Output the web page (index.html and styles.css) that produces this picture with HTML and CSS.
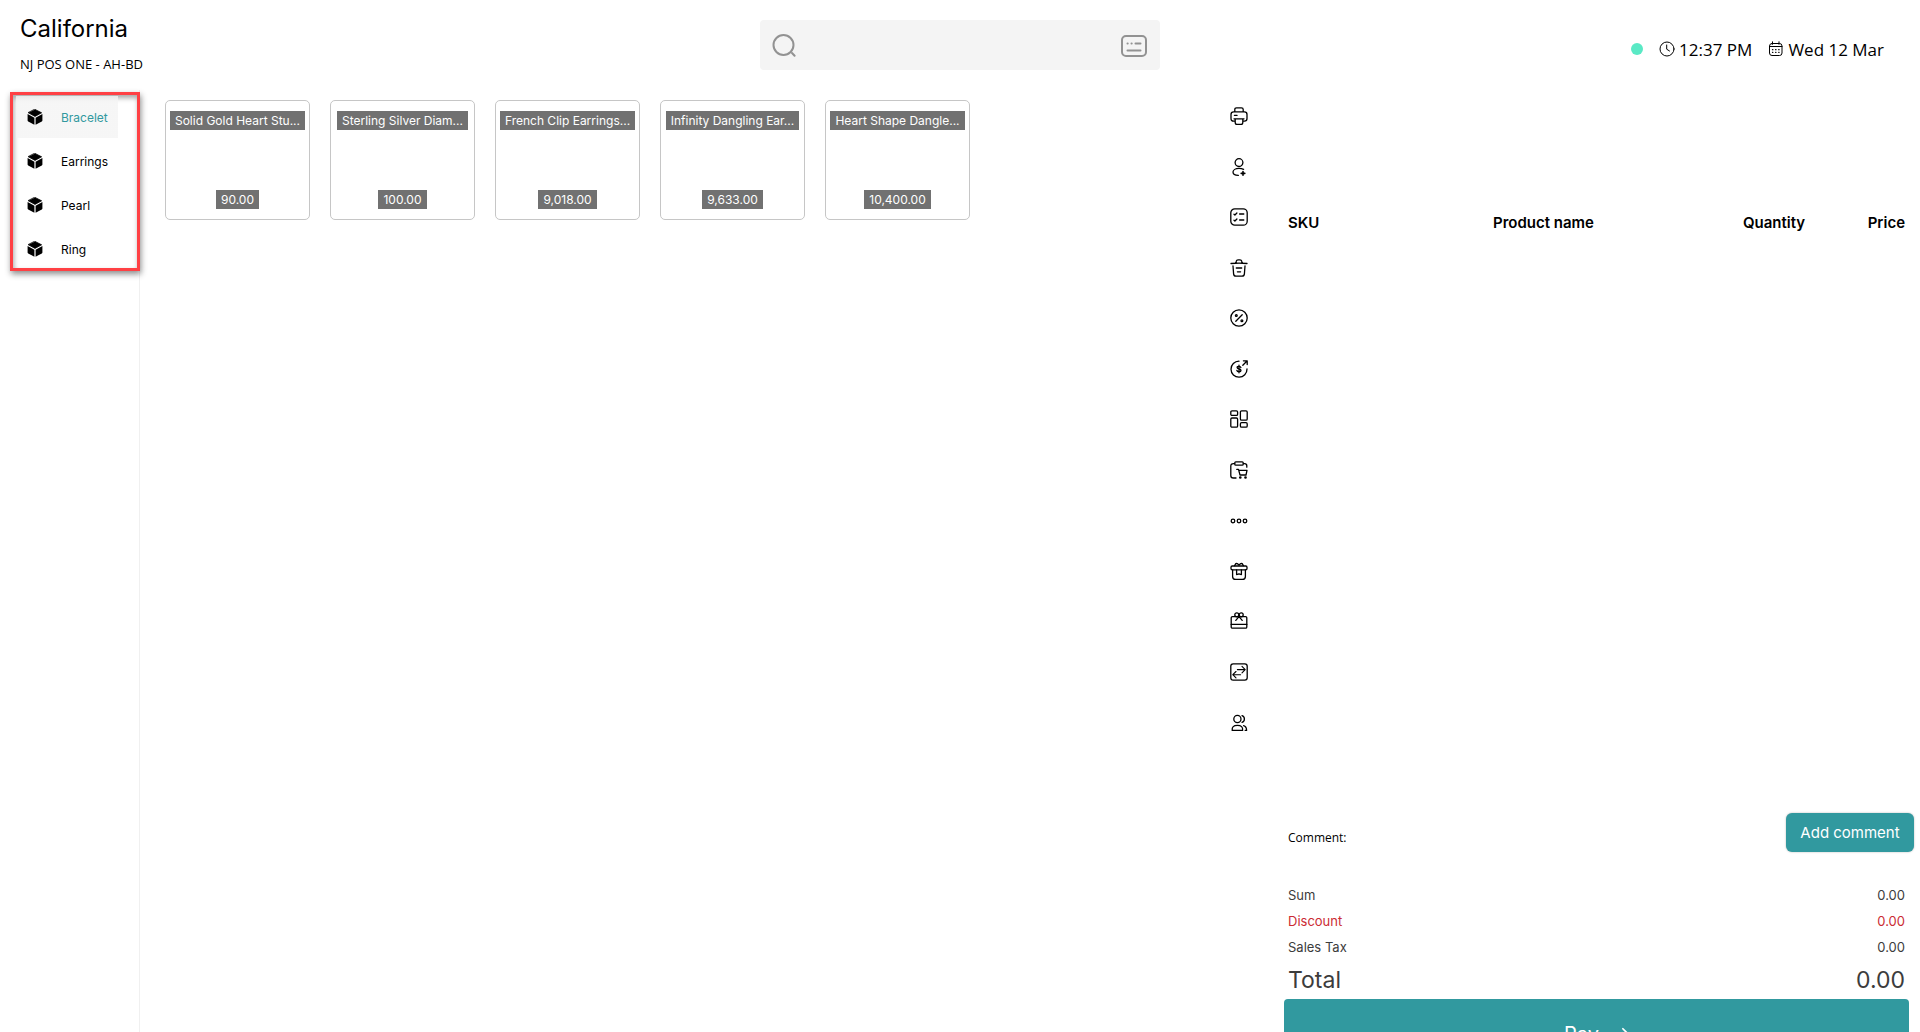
FILE: index.html
```html
<!DOCTYPE html>
<html lang="en">
<head>
<meta charset="utf-8">
<title>California - POS</title>
<link rel="stylesheet" href="styles.css">
</head>
<body>
<svg class="defs" aria-hidden="true">
  <symbol id="cube" viewBox="0 0 16 16">
    <path d="M8 .4 14.600 3.800 8 7.400 1.400 3.800Z" fill="currentColor" stroke="currentColor" stroke-linejoin="round" stroke-width=".8"/>
    <path d="M.6 4.900 7.400 8.700V15.700L1.200 12.400Q.6 12 .6 11.400ZM15.400 4.900 8.600 8.700V15.700L14.800 12.400Q15.400 12 15.400 11.400Z" fill="currentColor"/>
  </symbol>
</svg>
<header class="topbar">
  <div class="store">
    <h1 class="store-name">California</h1>
    <p class="store-register">NJ POS ONE - AH-BD</p>
  </div>
  <div class="search">
    <svg class="search-icon" viewBox="0 0 24 24"><circle cx="11.5" cy="11" r="10"/><path d="m20 19 2.6 2.8"/></svg>
    <input class="search-input" type="text" aria-label="Search">
    <button class="keyboard" type="button" aria-label="Keyboard">
      <svg viewBox="0 0 26 22"><rect x="1" y="1" width="24" height="20" rx="4"/><path d="M6.5 8.5h.2M10.500 8.500h.2M14.500 8.500h5M6.500 15.500h13"/></svg>
    </button>
  </div>
  <div class="status">
    <span class="online"></span>
    <span class="status-item">
      <svg viewBox="0 0 16 16"><circle cx="8" cy="8" r="7"/><path d="M7.700 4v4.200l2.800 1.800"/></svg>12:37 PM
    </span>
    <span class="status-item">
      <svg viewBox="0 0 16 16"><rect x="1.500" y="2.500" width="12.500" height="12" rx="2.500"/><path d="M2 5.500h12M4.500.8v2.500M11 .8v2.500"/><path d="M4.500 8.700h.4M7.600 8.700h.4M10.700 8.700h.4M4.500 11.300h.4M7.600 11.300h.4M10.700 11.300h.4" stroke-width="1.200"/></svg>Wed 12 Mar
    </span>
  </div>
</header>
<main class="layout">
  <div class="sidebar">
    <nav class="categories" aria-label="Categories">
      <a class="category category-active" href="#bracelet"><svg><use href="#cube"/></svg>Bracelet</a>
      <a class="category" href="#earrings"><svg><use href="#cube"/></svg>Earrings</a>
      <a class="category" href="#pearl"><svg><use href="#cube"/></svg>Pearl</a>
      <a class="category" href="#ring"><svg><use href="#cube"/></svg>Ring</a>
    </nav>
  </div>
  <section class="products" aria-label="Products">
    <button class="product" type="button"><span class="tag">Solid Gold Heart Stu...</span><span class="tag">90.00</span></button>
    <button class="product" type="button"><span class="tag">Sterling Silver Diam...</span><span class="tag">100.00</span></button>
    <button class="product" type="button"><span class="tag">French Clip Earrings...</span><span class="tag">9,018.00</span></button>
    <button class="product" type="button"><span class="tag">Infinity Dangling Ear...</span><span class="tag">9,633.00</span></button>
    <button class="product" type="button"><span class="tag">Heart Shape Dangle...</span><span class="tag">10,400.00</span></button>
  </section>
  <div class="tools">
    <button class="tool" type="button" aria-label="Print"><svg viewBox="0 0 18 18"><path d="M4.800 4.600V2.600Q4.800.8 6.500.8h5Q13.200.8 13.200 2.600v2M5 14.200H3.600Q1 14.200 1 11.600V7.400Q1 4.800 3.600 4.800h10.800Q17 4.800 17 7.400v4.200q0 2.600-2.600 2.600H13M4 11.800h10M5.200 11.800v3.600q0 1.900 1.900 1.900h3.800q1.900 0 1.900-1.900v-3.600M4.400 8.300h2.700"/></svg></button>
    <button class="tool" type="button" aria-label="Add customer"><svg viewBox="0 0 18 18"><circle cx="9" cy="4.600" r="3.900"/><path d="M13.600 11.300Q11.600 10.400 9 10.400c-3.500 0-6 1.600-6 3.600s2.300 3.300 5.400 3.300"/><path d="M13 13.600v3.600M11.200 15.400h3.600" stroke-width="1.600"/></svg></button>
    <button class="tool" type="button" aria-label="Orders"><svg viewBox="0 0 18 18"><rect x=".8" y=".8" width="16.400" height="16.400" rx="4"/><path d="m4 6.200.9.800 2-2M9.600 6h4.200M4 12.200l.9.800 2-2M9.600 12h4.200"/></svg></button>
    <button class="tool" type="button" aria-label="Clear cart"><svg viewBox="0 0 18 18"><path d="M1 4.500q8-.8 16 0M5.800 4l.5-1.800Q6.600.8 8 .8h2q1.400 0 1.700 1.400L12.200 4M3 7l.6 7.900q.2 2.300 2.400 2.300h6q2.200 0 2.400-2.300L15 7M6.300 9h5.400M7.400 12.800h3.200"/></svg></button>
    <button class="tool" type="button" aria-label="Discount"><svg viewBox="0 0 18 18"><circle cx="9" cy="9" r="8.200"/><path d="m5.800 12.200 6.400-6.400"/><circle cx="6.300" cy="6.500" r=".9"/><circle cx="11.900" cy="11.700" r=".9"/></svg></button>
    <button class="tool" type="button" aria-label="Refund"><svg viewBox="0 0 18 18"><path d="M9 1.200A8 8 0 1 0 17 9M12.800 5.200 17 1M13.400.8h3.800v3.800"/><path d="M10.900 7.500C10.600 6.500 9.900 6.300 9 6.300c-1.200 0-1.900.4-1.900 1.200C7.100 9.400 11 8.600 11 10.500c0 .9-.9 1.300-2 1.300-1.100 0-1.900-.4-2.100-1.300M9 5.200v7.600"/></svg></button>
    <button class="tool" type="button" aria-label="Dashboard"><svg viewBox="0 0 18 18"><rect x=".8" y=".8" width="6.800" height="4.600" rx="1.200"/><rect x="10.400" y=".8" width="6.800" height="9.400" rx="1.200"/><rect x=".8" y="8" width="6.800" height="9.200" rx="1.200"/><rect x="10.400" y="12.700" width="6.800" height="4.500" rx="1.200"/></svg></button>
    <button class="tool" type="button" aria-label="Held carts"><svg viewBox="0 0 18 18"><path d="M4.600 2.600H3.400Q.8 2.600.8 5.200v9.200Q.8 17 3.400 17H6M13.400 2.600h1.200q2.200 0 2.200 2.200v1.400"/><rect x="4.800" y=".8" width="8.400" height="3.400" rx="1"/><path d="M6.800 8.400h1.700L10 14h6l1-4.600H8.800"/><circle cx="10.300" cy="16.500" r=".7"/><circle cx="15.500" cy="16.500" r=".7"/></svg></button>
    <button class="tool" type="button" aria-label="More"><svg viewBox="0 0 18 18"><circle cx="3" cy="9" r="1.800"/><circle cx="9" cy="9" r="1.800"/><circle cx="15" cy="9" r="1.800"/></svg></button>
    <button class="tool" type="button" aria-label="Loyalty"><svg viewBox="0 0 18 18"><rect x="1" y="4" width="16" height="3.800" rx="1.200"/><path d="M2.600 7.800v6.600q0 3 3 3h6.800q3 0 3-3V7.800M6.600 7.800v4.800L9 11.800l2.400.8V7.800M4.600 3.600 5.800 1.600Q7.400 1 9 3.200 10.600 1 12.200 1.600l1.200 2"/></svg></button>
    <button class="tool" type="button" aria-label="Gift card"><svg viewBox="0 0 18 18"><rect x="1.200" y="3.600" width="15.600" height="11.600" rx="1.200"/><path d="M1.200 11.400h15.600M9 3.600 5.800 7.400M9 3.600l3.200 3.800"/><circle cx="6.800" cy="1.800" r="2"/><circle cx="11.200" cy="1.800" r="2"/></svg></button>
    <button class="tool" type="button" aria-label="Exchange"><svg viewBox="0 0 18 18"><rect x=".8" y=".8" width="16.400" height="16.400" rx="2.400"/><path d="M7.400 6.600h7.800M12 3.400l3.200 3.200L12 9.800M10.600 11.700H2.800M6 8.500l-3.200 3.200L6 14.900" stroke-width="1.100"/></svg></button>
    <button class="tool" type="button" aria-label="Customers"><svg viewBox="0 0 18 18"><circle cx="7.400" cy="5" r="3.600"/><path d="M2.200 16.400q-.6-5 5.200-5t5.200 5ZM12 1.600q2.400.8 2.400 3.400T12 8.400M13.600 11.600q3 .8 3 4.800h-1.400"/></svg></button>
  </div>
  <section class="cart" aria-label="Cart">
    <table class="cart-table">
      <thead><tr><th class="col-sku">SKU</th><th class="col-name">Product name</th><th class="col-qty">Quantity</th><th class="col-price">Price</th></tr></thead>
      <tbody></tbody>
    </table>
    <div class="comment">
      <span>Comment:</span>
      <button class="add-comment" type="button">Add comment</button>
    </div>
    <dl class="totals">
      <div class="row"><dt>Sum</dt><dd>0.00</dd></div>
      <div class="row row-discount"><dt>Discount</dt><dd>0.00</dd></div>
      <div class="row"><dt>Sales Tax</dt><dd>0.00</dd></div>
      <div class="row row-total"><dt>Total</dt><dd>0.00</dd></div>
    </dl>
    <button class="pay" type="button">Pay<svg viewBox="0 0 16 16"><path d="M1 8h13M9 2l6 6-6 6"/></svg></button>
  </section>
</main>
</body>
</html>
```
FILE: styles.css
```css
* { box-sizing: border-box; }

body {
  margin: 0;
  height: 100vh;
  overflow: hidden;
  background: #fff;
  color: #000;
  font-family: Inter, "Liberation Sans", sans-serif;
  font-size: 12px;
}

button, input { font: inherit; color: inherit; }
button { padding: 0; border: 0; background: none; cursor: pointer; }
svg { fill: none; stroke: currentColor; stroke-linecap: round; stroke-linejoin: round; }
.defs { position: absolute; width: 0; height: 0; }

.topbar {
  display: grid;
  grid-template-columns: 1fr 400px 1fr;
  height: 90px;
}

.store { padding: 13px 20px 0; }
.store-name { margin: 0; font-size: 24px; font-weight: 400; line-height: 32px; }
.store-register {
  margin: 9px 0 0;
  font-family: "Open Sans", "Noto Sans", sans-serif;
  font-size: 13px;
  line-height: 20px;
}

.search {
  display: flex;
  align-items: center;
  height: 50px;
  margin-top: 20px;
  padding: 2px 13px 0 12px;
  border-radius: 4px;
  background: #f4f4f4;
  color: #929292;
}
.search-icon { width: 24px; height: 24px; stroke-width: 2; }
.search-input { flex: 1; min-width: 0; height: 100%; padding: 0 12px; border: 0; background: none; color: #000; outline: none; }
.keyboard { display: flex; }
.keyboard svg { width: 26px; height: 22px; stroke-width: 2; }

.status {
  display: flex;
  align-items: center;
  justify-content: flex-end;
  gap: 16px;
  height: 100%;
  padding: 8px 36px 0 0;
  font-family: "Open Sans", "Noto Sans", sans-serif;
  font-size: 17px;
}
.status-item { display: flex; align-items: center; gap: 4px; }
.status-item svg { width: 16px; height: 16px; }
.online { width: 12px; height: 12px; border-radius: 50%; background: #5ae9c5; }

.layout {
  display: grid;
  grid-template-columns: 140px 1fr 90px 636px;
  height: calc(100vh - 53px);
}

.sidebar { padding: 2px 0 0 10px; border-right: 1px solid #f0f0f0; }
.categories {
  width: 130px;
  height: 179px;
  padding: 1px 19px 0 3px;
  border: 3px solid #ff4044;
  box-shadow: 1px 3px 6px rgba(0, 0, 0, .45), inset 1px 3px 5px rgba(0, 0, 0, .35);
}
.category {
  display: flex;
  align-items: center;
  gap: 18px;
  height: 44px;
  padding: 0 0 2px 11px;
  color: #000;
  text-decoration: none;
}
.category svg { width: 16px; height: 16px; stroke: none; }
.category-active {
  background: linear-gradient(rgba(244, 244, 244, .8), rgba(244, 244, 244, .8)) no-repeat 0 0 / 100% 42px;
  color: #31999f;
}
.category-active svg { color: #000; }

.products {
  display: flex;
  flex-wrap: wrap;
  align-content: flex-start;
  gap: 20px;
  padding: 10px 0 0 25px;
}
.product {
  display: flex;
  flex-direction: column;
  align-items: center;
  justify-content: space-between;
  width: 145px;
  height: 120px;
  padding: 10px 0;
  border: 1px solid #c6c6c6;
  border-radius: 5px;
}
.tag {
  padding: 0 5px;
  background: #717171;
  color: #fff;
  line-height: 19px;
  white-space: nowrap;
}

.tools {
  display: grid;
  grid-auto-rows: 1fr;
  height: 658px;
  padding: 1px 0 0 36px;
}
.tool { display: flex; align-items: center; width: 18px; }
.tool svg { width: 18px; height: 18px; stroke-width: 1.3px; overflow: visible; }

.cart {
  display: flex;
  flex-direction: column;
  padding-right: 11px;
}
.cart-table {
  width: 100%;
  margin: 121px 0 auto;
  border-collapse: collapse;
  table-layout: fixed;
  font-size: 15px;
  font-weight: 600;
  line-height: 24px;
}
.cart-table th { padding: 0 4px; font-weight: 600; }
.col-sku { width: 94px; text-align: left; }
.col-qty { width: 130px; }
.col-price { width: 70px; }
.cart-table .col-price { text-align: right; }

.comment {
  display: flex;
  align-items: center;
  justify-content: space-between;
  margin: 0 -5px 30px 4px;
  font-family: "Open Sans", "Noto Sans", sans-serif;
}
.comment span { padding-top: 10px; }
.add-comment {
  width: 128px;
  height: 39px;
  border-radius: 6px;
  background: #31999f;
  box-shadow: 0 0 2px rgba(0, 0, 0, .3);
  color: #fff;
  font-family: Inter, sans-serif;
  font-size: 15px;
}

.totals { margin: 0; padding: 0 4px; color: #3c3c3c; font-size: 13px; }
.row { display: flex; align-items: center; justify-content: space-between; height: 26px; }
.row dd { margin: 0; }
.row-discount { color: #cb2b33; }
.row-total { height: 39px; font-size: 23px; }

.pay {
  display: flex;
  align-items: center;
  justify-content: center;
  gap: 16px;
  height: 70px;
  flex-shrink: 0;
  border-radius: 4px 4px 0 0;
  background: #31999f;
  color: #fff;
  font-size: 20px;
}
.pay svg { width: 14px; height: 14px; stroke-width: 2; }
```
